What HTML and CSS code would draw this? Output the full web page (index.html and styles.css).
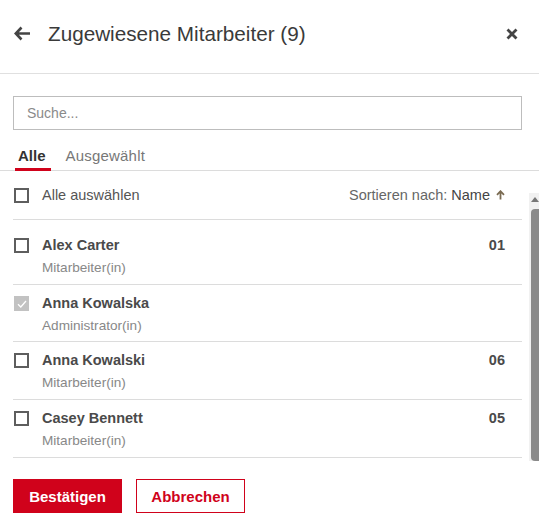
FILE: index.html
```html
<!DOCTYPE html>
<html lang="de">
<head>
<meta charset="utf-8">
<title>Zugewiesene Mitarbeiter</title>
<link rel="stylesheet" href="styles.css">
</head>
<body>
<div class="dialog">
  <header class="header">
    <button class="icon-btn back" aria-label="Zurück">
      <svg width="17" height="15" viewBox="0 0 17 15"><path d="M7.5 1.5 L1.8 7.5 L7.5 13.5 M2 7.5 H16" fill="none" stroke="#444" stroke-width="2.6"/></svg>
    </button>
    <h1 class="title">Zugewiesene Mitarbeiter (9)</h1>
    <button class="icon-btn close" aria-label="Schließen">
      <svg width="12" height="12" viewBox="0 0 12 12"><path d="M1.5 1.5 L10.5 10.5 M10.5 1.5 L1.5 10.5" fill="none" stroke="#444" stroke-width="2.8"/></svg>
    </button>
  </header>

  <div class="search-wrap">
    <input class="search" type="text" placeholder="Suche...">
  </div>

  <nav class="tabs">
    <span class="tab active">Alle</span>
    <span class="tab">Ausgewählt</span>
  </nav>

  <div class="list-wrap">
    <div class="list">
      <div class="select-all">
        <span class="checkbox"></span>
        <span class="select-label">Alle auswählen</span>
        <span class="sort">Sortieren nach: <span class="sort-key">Name</span>
          <svg width="9" height="10" viewBox="0 0 9 10"><path d="M4.5 9.5 V2 M1 4.8 L4.5 1.2 L8 4.8" fill="none" stroke="#7a6b52" stroke-width="1.8"/></svg>
        </span>
      </div>

      <div class="item first">
        <span class="checkbox"></span>
        <div class="info"><div class="name">Alex Carter</div><div class="role">Mitarbeiter(in)</div></div>
        <span class="num">01</span>
      </div>
      <div class="item second">
        <span class="checkbox checked"><svg width="14" height="14" viewBox="0 0 14 14"><path d="M3 7.2 L5.8 10 L11 4" fill="none" stroke="#fff" stroke-width="1.3"/></svg></span>
        <div class="info"><div class="name">Anna Kowalska</div><div class="role">Administrator(in)</div></div>
        <span class="num"></span>
      </div>
      <div class="item">
        <span class="checkbox"></span>
        <div class="info"><div class="name">Anna Kowalski</div><div class="role">Mitarbeiter(in)</div></div>
        <span class="num">06</span>
      </div>
      <div class="item">
        <span class="checkbox"></span>
        <div class="info"><div class="name">Casey Bennett</div><div class="role">Mitarbeiter(in)</div></div>
        <span class="num">05</span>
      </div>
    </div>
    <div class="scrollbar" aria-hidden="true">
      <span class="scroll-arrow"></span>
      <span class="scroll-thumb"></span>
    </div>
  </div>

  <footer class="footer">
    <button class="btn primary">Bestätigen</button>
    <button class="btn secondary">Abbrechen</button>
  </footer>
</div>
</body>
</html>
```

FILE: styles.css
```css
* { box-sizing: border-box; }
html, body { margin: 0; padding: 0; background: #fff; }
body {
  font-family: "Liberation Sans", Arial, sans-serif;
  color: #444;
  font-size: 14.5px;
  width: 539px;
  height: 525px;
  overflow: hidden;
}
.dialog { display: flex; flex-direction: column; }

.header {
  display: flex;
  align-items: center;
  height: 74px;
  border-bottom: 1px solid #e0e0e0;
  padding: 0 16px 6px 14px;
}
.icon-btn {
  background: none;
  border: 0;
  padding: 0;
  display: flex;
  align-items: center;
  cursor: pointer;
}
.back { margin-right: 17px; }
.title {
  flex: 1;
  margin: 0;
  font-weight: 400;
  font-size: 20.7px;
  color: #3a3a3a;
}
.close { margin-right: 5px; }

.search-wrap { padding: 22px 17px 0 13px; }
.search {
  display: block;
  width: 100%;
  height: 34px;
  border: 1px solid #bdbdbd;
  border-radius: 0;
  padding: 0 13px;
  font-family: inherit;
  font-size: 14px;
  color: #444;
  outline: none;
}
.search::placeholder { color: #8a8a8a; }

.tabs {
  display: flex;
  margin-top: 14px;
  border-bottom: 1px solid #dcdcdc;
  padding-left: 15px;
}
.tab {
  font-size: 15px;
  color: #777;
  padding: 3px 3px 4px;
  margin-right: 12px;
  border-bottom: 3px solid transparent;
  margin-bottom: -1px;
  letter-spacing: 0.2px;
}
.tab.active {
  font-weight: 700;
  color: #333;
  border-bottom-color: #d0021b;
  padding-right: 5px;
  letter-spacing: 0;
}

.list-wrap {
  display: flex;
  padding-left: 13px;
}
.list { width: 509px; }
.scrollbar {
  margin-left: 7px;
  margin-top: 22px;
  width: 10px;
  height: 268px;
  background: #f1f1f1;
  display: flex;
  flex-direction: column;
  align-items: flex-start;
}
.scroll-arrow {
  margin: 4px 0 0 2px;
  width: 0; height: 0;
  border-left: 4px solid transparent;
  border-right: 4px solid transparent;
  border-bottom: 5px solid #777;
}
.scroll-thumb {
  margin: 7px 0 0 2px;
  width: 8px;
  flex: 1;
  background: #8a8a8a;
  border-radius: 4px 0 0 4px;
}

.checkbox {
  width: 15px;
  height: 15px;
  border: 2px solid #5e5e5e;
  flex: none;
  display: flex;
  align-items: center;
  justify-content: center;
}
.checkbox.checked {
  border: 0;
  background: #c2c2c2;
}

.select-all {
  display: flex;
  align-items: center;
  height: 49px;
  border-bottom: 1px solid #dcdcdc;
  padding: 0 17px 0 1px;
}
.select-label {
  margin-left: 13px;
  flex: 1;
  color: #555;
}
.sort {
  color: #666;
  display: flex;
  align-items: center;
}
.sort-key { color: #444; margin-left: 4px; margin-right: 6px; }

.item {
  display: flex;
  align-items: flex-start;
  padding: 9px 17px 5px 1px;
  border-bottom: 1px solid #dcdcdc;
  height: 58px;
}
.item.first { height: 65px; padding-top: 16px; }
.item.second { height: 57px; }
.item .checkbox { margin-top: 2px; }
.info { flex: 1; margin-left: 13px; }
.name {
  font-weight: 700;
  color: #4a4a4a;
  line-height: 18px;
}
.role {
  font-size: 13.6px;
  color: #888;
  line-height: 18px;
  margin-top: 5px;
}
.num {
  font-weight: 700;
  color: #4a4a4a;
  line-height: 18px;
}

.footer {
  display: flex;
  gap: 14px;
  padding: 18px 13px 0;
}
.btn {
  height: 34px;
  width: 109px;
  font-family: inherit;
  font-size: 15px;
  font-weight: 700;
  border-radius: 0;
  cursor: pointer;
}
.btn.primary {
  background: #d0021b;
  border: 1px solid #d0021b;
  color: #fff;
}
.btn.secondary {
  background: #fff;
  border: 1px solid #d0021b;
  color: #d0021b;
}
```
